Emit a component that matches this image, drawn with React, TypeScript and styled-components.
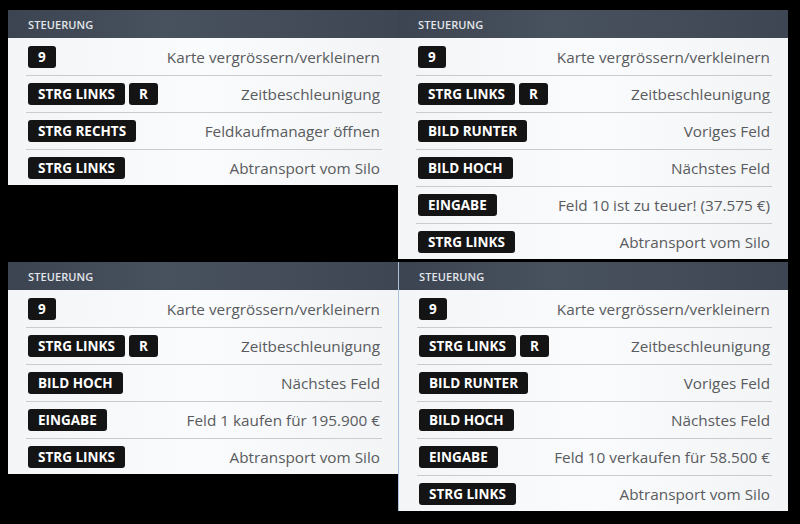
import React from "react";
import styled, { createGlobalStyle } from "styled-components";

// Tastenbelegung der vier Bildschirmausschnitte
interface Binding {
  keys: string[];
  label: string;
}

const panels: Binding[][] = [
  [
    { keys: ["9"], label: "Karte vergrössern/verkleinern" },
    { keys: ["STRG LINKS", "R"], label: "Zeitbeschleunigung" },
    { keys: ["STRG RECHTS"], label: "Feldkaufmanager öffnen" },
    { keys: ["STRG LINKS"], label: "Abtransport vom Silo" },
  ],
  [
    { keys: ["9"], label: "Karte vergrössern/verkleinern" },
    { keys: ["STRG LINKS", "R"], label: "Zeitbeschleunigung" },
    { keys: ["BILD RUNTER"], label: "Voriges Feld" },
    { keys: ["BILD HOCH"], label: "Nächstes Feld" },
    { keys: ["EINGABE"], label: "Feld 10 ist zu teuer! (37.575 €)" },
    { keys: ["STRG LINKS"], label: "Abtransport vom Silo" },
  ],
  [
    { keys: ["9"], label: "Karte vergrössern/verkleinern" },
    { keys: ["STRG LINKS", "R"], label: "Zeitbeschleunigung" },
    { keys: ["BILD HOCH"], label: "Nächstes Feld" },
    { keys: ["EINGABE"], label: "Feld 1 kaufen für 195.900 €" },
    { keys: ["STRG LINKS"], label: "Abtransport vom Silo" },
  ],
  [
    { keys: ["9"], label: "Karte vergrössern/verkleinern" },
    { keys: ["STRG LINKS", "R"], label: "Zeitbeschleunigung" },
    { keys: ["BILD RUNTER"], label: "Voriges Feld" },
    { keys: ["BILD HOCH"], label: "Nächstes Feld" },
    { keys: ["EINGABE"], label: "Feld 10 verkaufen für 58.500 €" },
    { keys: ["STRG LINKS"], label: "Abtransport vom Silo" },
  ],
];

const GlobalStyle = createGlobalStyle`
  html, body {
    margin: 0;
    padding: 0;
    background: #000;
    font-family: "Open Sans", "DejaVu Sans", sans-serif;
  }
`;

const Page = styled.div`
  width: 800px;
  height: 524px;
  box-sizing: border-box;
  padding: 10px 0 0 8px;
  background: #000;
  display: grid;
  grid-template-columns: 390px 390px;
  grid-template-rows: 248px auto;
  row-gap: 4px;
  align-items: start;
`;

const Panel = styled.section<{ $edge?: boolean }>`
  display: flex;
  flex-direction: column;
  box-sizing: border-box;
  border-left: ${(p) => (p.$edge ? "1px solid #a9c3de" : "none")};
`;

const Header = styled.div`
  height: 28px;
  display: flex;
  align-items: center;
  padding-left: 20px;
  background: linear-gradient(90deg, #3b4450 0%, #48525e 40%, #434c58 70%, #3d4652 100%);
  color: #e2e6eb;
  font-size: 11px;
  font-weight: 600;
  letter-spacing: 0.1px;
`;

const Body = styled.div`
  padding-top: 1px;
  background: linear-gradient(90deg, #f4f5f7 0%, #fafbfc 50%, #f3f4f6 100%);
`;

const Row = styled.div`
  height: 37px;
  box-sizing: border-box;
  margin: 0 16px 0 18px;
  padding: 0 2px;
  display: flex;
  align-items: center;
  justify-content: space-between;
  border-bottom: 1px solid #c9cbce;

  &:last-child {
    height: 35px;
    border-bottom: none;
  }
`;

const Keys = styled.div`
  display: flex;
  gap: 4px;
`;

const Key = styled.span`
  height: 22px;
  display: inline-flex;
  align-items: center;
  padding: 0 10px;
  border-radius: 3px;
  background: #141414;
  color: #fff;
  font-size: 13.5px;
  font-weight: 700;
  white-space: nowrap;
`;

const Label = styled.span`
  color: #595b5e;
  font-size: 15.3px;
  white-space: nowrap;
`;

const App: React.FC = () => {
  return (
    <>
      <GlobalStyle />
      <Page>
        {panels.map((rows, i) => (
          <Panel key={i} $edge={i === 3}>
            <Header>STEUERUNG</Header>
            <Body>
              {rows.map((r, j) => (
                <Row key={j}>
                  <Keys>
                    {r.keys.map((k) => (
                      <Key key={k}>{k}</Key>
                    ))}
                  </Keys>
                  <Label>{r.label}</Label>
                </Row>
              ))}
            </Body>
          </Panel>
        ))}
      </Page>
    </>
  );
};

export default App;
